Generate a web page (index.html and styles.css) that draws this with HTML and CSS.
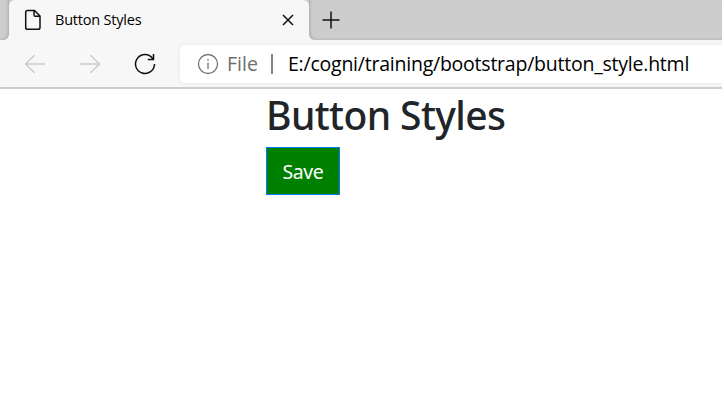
FILE: index.html
```html
<!DOCTYPE html>
<html lang="en">
<head>
<meta charset="utf-8">
<title>Button Styles</title>
<link rel="stylesheet" href="styles.css">
</head>
<body>
<div class="tabstrip">
  <div class="strip-left"></div>
  <div class="tab">
    <svg class="doc" width="18" height="22" viewBox="0 0 18 22"><path d="M3.500 1.500H10.500L16 7V18.500Q16 20.300 14.200 20.300H3.500Q1.700 20.300 1.700 18.500V3.300Q1.700 1.500 3.500 1.500ZM10 1.500V6Q10 7.300 11.300 7.300H16"/></svg>
    <span class="tab-title">Button Styles</span>
    <svg class="close" width="12" height="12" viewBox="0 0 12 12"><path d="M1 1L11 11M11 1L1 11"/></svg>
  </div>
  <div class="strip-right">
    <svg width="18" height="18" viewBox="0 0 18 18"><path d="M9 .5V17.500M.5 9H17.500"/></svg>
  </div>
</div>
<div class="toolbar">
  <svg class="nav off" width="22" height="20" viewBox="0 0 22 20"><path d="M21 10H1.500M10.500 1.300L1.500 10L10.500 18.700"/></svg>
  <svg class="nav off" width="22" height="20" viewBox="0 0 22 20"><path d="M1 10H20.500M11.500 1.300L20.500 10L11.500 18.700"/></svg>
  <svg class="nav" width="22" height="22" viewBox="0 0 22 22"><path d="M20.500 11A9.500 9.500 0 1 1 18.800 5.600M19.500 1V6.500H13.800"/></svg>
  <div class="address">
    <svg class="info" width="22" height="22" viewBox="0 0 22 22"><circle cx="11" cy="11" r="9.500"/><path d="M11 9.500V16M11 6V7.700"/></svg>
    <span class="scheme">File</span>
    <span class="divider"></span>
    <span class="url">E:/cogni/training/bootstrap/button_style.html</span>
  </div>
</div>
<main class="page">
  <h1>Button Styles</h1>
  <button class="save">Save</button>
</main>
</body>
</html>
```
FILE: styles.css
```css
* { box-sizing: border-box; }
html { background: #fff; }
body {
  width: 722px;
  margin: 0;
  font-family: "Open Sans", "Noto Sans", sans-serif;
  overflow: hidden;
}
svg {
  flex: none;
  fill: none;
  stroke: #111;
  stroke-width: 1.5;
}
.tabstrip {
  display: flex;
  height: 40px;
  background: #f7f7f7;
}
.strip-left {
  width: 9px;
  background: #cdcdcd;
  border-radius: 0 0 6px 0;
  box-shadow: inset -2px -1px 3px -1px #aaa;
}
.tab {
  display: flex;
  align-items: center;
  width: 300px;
  padding: 0 15px;
  background: #f7f7f7;
  box-shadow: 0 -6px 0 #cdcdcd;
  border-radius: 6px 6px 0 0;
}
.tab-title {
  margin: -2px 0 0 13px;
  flex: 1;
  font-size: 14.5px;
  letter-spacing: -0.2px;
  white-space: nowrap;
  color: #000;
}
.strip-right {
  display: flex;
  align-items: center;
  flex: 1;
  padding-left: 13px;
  background: #cdcdcd;
  border-radius: 0 0 0 6px;
  box-shadow: inset 2px -1px 3px -1px #aaa;
}
.toolbar {
  display: flex;
  align-items: center;
  height: 49px;
  padding-left: 24px;
  background: #f7f7f7;
  border-bottom: 2px solid #cdcdcd;
}
.nav { margin-right: 33px; }
.nav.off { stroke: #cbcbcb; }
.address {
  display: flex;
  align-items: center;
  flex: 1;
  min-width: 0;
  height: 38px;
  margin-left: -9px;
  padding-left: 17px;
  background: #fff;
  border-radius: 5px 0 0 5px;
  box-shadow: 0 0 4px #e4e4e4;
  font-size: 19.5px;
  white-space: nowrap;
}
.info { stroke: #777; stroke-width: 1.3; }
.scheme {
  width: 44px;
  margin-left: 8px;
  color: #6e6e6e;
}
.divider {
  width: 2px;
  height: 20px;
  background: #858585;
}
.url {
  margin-left: 15px;
  letter-spacing: -0.23px;
  color: #000;
}
.page { padding: 0 0 0 266px; }
h1 {
  margin: 0;
  height: 58px;
  font-family: "Noto Sans", "Open Sans", sans-serif;
  font-size: 39px;
  line-height: 52px;
  font-weight: 500;
  letter-spacing: -0.6px;
  color: #212529;
}
.save {
  display: block;
  width: 74px;
  height: 48px;
  padding: 0;
  background: green;
  border: 1px solid #007bff;
  color: #fff;
  font: 19.5px "Noto Sans", "Open Sans", sans-serif;
  letter-spacing: -0.4px;
}
```
